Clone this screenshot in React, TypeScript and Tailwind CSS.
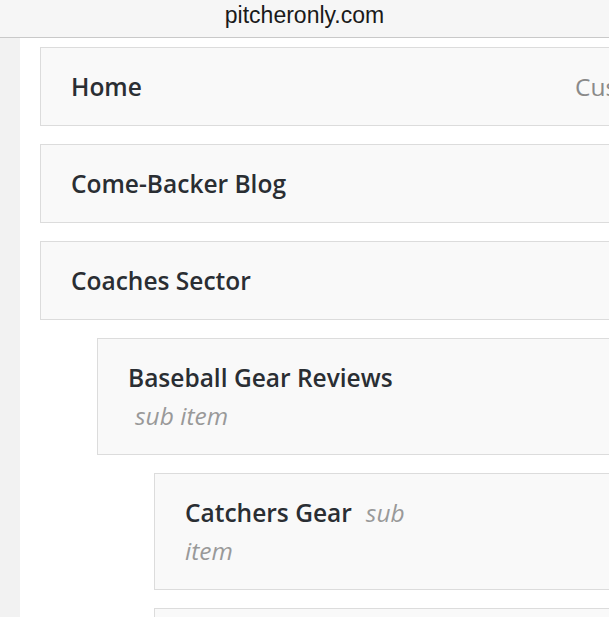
import React from 'react';

type Item = {
  title: string;
  depth: number;
  kind?: string;
  sub?: 'block' | 'wrap';
};

const items: Item[] = [
  { title: 'Home', depth: 0, kind: 'Custom Link' },
  { title: 'Come-Backer Blog', depth: 0 },
  { title: 'Coaches Sector', depth: 0 },
  { title: 'Baseball Gear Reviews', depth: 1, sub: 'block' },
  { title: 'Catchers Gear', depth: 2, sub: 'wrap' },
  { title: '', depth: 2 },
];

const indent = ['ml-[40px]', 'ml-[97px]', 'ml-[154px]'];

const MenuItem = ({ item }: { item: Item }) => (
  <div
    className={`${indent[item.depth]} mr-[-200px] mb-[18px] border border-[#dcdcdc] bg-[#f9f9f9] pl-[30px] pt-[20px] pb-[19px] flex`}
  >
    <div className="w-[504px] min-h-[38px] shrink-0 text-[24.5px] leading-[38px] text-[#2a2e33] font-semibold">
      {item.title}
      {item.sub === 'block' && (
        <div className="pl-[7px] italic font-normal text-[#999]">sub item</div>
      )}
      {item.sub === 'wrap' && (
        <>
          <span className="pl-[14px] italic font-normal text-[#999]">sub</span>
          <br />
          <span className="italic font-normal text-[#999]">item</span>
        </>
      )}
    </div>
    {item.kind && (
      <div className="whitespace-nowrap text-[24.5px] leading-[38px] text-[#8a8a8a]">{item.kind}</div>
    )}
  </div>
);

export default function App() {
  return (
    <div className="w-[609px] h-[617px] overflow-hidden bg-white flex flex-col" style={{ fontFamily: '"Open Sans", sans-serif' }}>
      <div className="h-[38px] shrink-0 bg-[#f6f6f6] border-b border-[#c9c9c9] flex items-center justify-center pb-[6px]">
        <span className="text-[23px] text-[#1a1a1a]" style={{ fontFamily: '"Liberation Sans", Arial, sans-serif' }}>
          pitcheronly.com
        </span>
      </div>
      <div className="flex flex-1 overflow-hidden">
        <div className="w-[20px] shrink-0 bg-[#f2f2f2]" />
        <div className="flex-1 overflow-hidden pt-[9px] ml-[-20px]">
          {items.map((item, i) => (
            <MenuItem key={i} item={item} />
          ))}
        </div>
      </div>
    </div>
  );
}
